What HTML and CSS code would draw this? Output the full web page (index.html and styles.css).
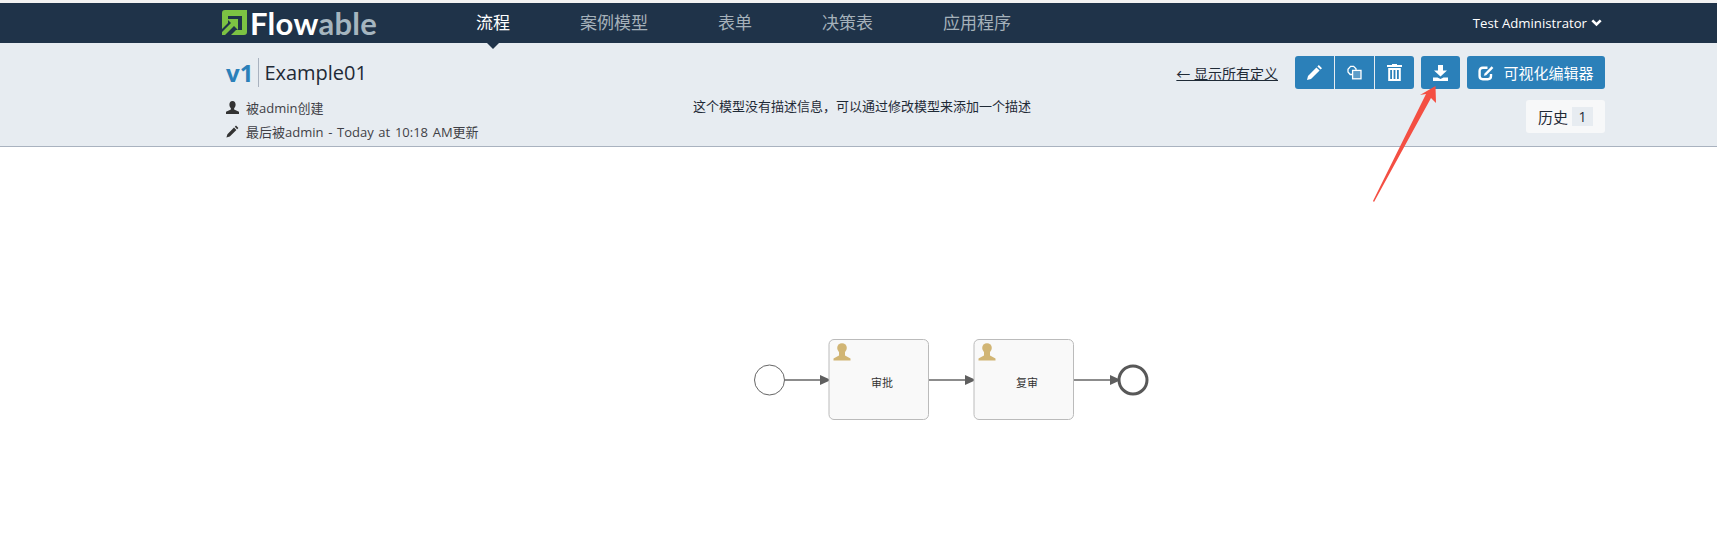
FILE: index.html
```html
<!DOCTYPE html>
<html lang="zh">
<head>
  <meta charset="UTF-8">
  <title>Flowable - Example01</title>
  <link rel="stylesheet" href="styles.css">
</head>
<body>
  <nav class="navbar">
    <a href="#" class="logo">
      <svg class="logo-mark" width="25" height="26" viewBox="0 0 25 26">
        <path d="M3 0H25V22Q25 25 22 25H9L14 20H20V6H6V13L0 19V3Q0 0 3 0Z" fill="#7cc243"/>
        <path d="M0 25L3 25 12 16 16 20V9H5L9 13 0 22Z" fill="#7cc243"/>
      </svg>
      <span class="logo-text">Flow<span class="logo-light">able</span></span>
    </a>
    <div class="nav-links">
      <a href="#" class="active">流程</a>
      <a href="#">案例模型</a>
      <a href="#">表单</a>
      <a href="#">决策表</a>
      <a href="#">应用程序</a>
    </div>
    <a href="#" class="user-menu">Test Administrator
      <svg width="11" height="8" viewBox="0 0 11 8"><path d="M1.3 1.3L5.5 5.5 9.7 1.3" fill="none" stroke="#fff" stroke-width="2.6"/></svg>
    </a>
  </nav>

  <header class="subheader">
    <div class="model-info">
      <h2 class="model-title"><span class="version">v1</span><span class="name">Example01</span></h2>
      <div class="meta">
        <svg width="13" height="13" viewBox="0 0 13 13"><path d="M6.5 0C8.5 0 9.6 1.6 9.6 3.6 9.6 5.3 8.9 6.6 8.1 7.4V8.6L13 10.7V13H0V10.7L4.9 8.6V7.4C4.1 6.6 3.4 5.3 3.4 3.6 3.4 1.6 4.5 0 6.5 0Z" fill="#333"/></svg>
        <span>被admin创建</span>
      </div>
      <div class="meta">
        <svg width="13" height="13" viewBox="0 0 13 13"><path d="M10 0.6L12.4 3 11.2 4.2 8.8 1.8ZM8 2.6L10.4 5 3.8 11.6 0.4 12.6 1.4 9.2Z" fill="#333"/></svg>
        <span>最后被admin - Today at 10:18 AM更新</span>
      </div>
    </div>
    <p class="description">这个模型没有描述信息，可以通过修改模型来添加一个描述</p>
    <div class="actions">
      <div class="action-row">
        <a href="#" class="back-link">← 显示所有定义</a>
        <div class="btn-group">
          <button class="btn">
            <svg width="17" height="17" viewBox="0 0 17 17"><path d="M12.8 1L16 4.2 14.6 5.6 11.4 2.4ZM10.4 3.4L13.6 6.6 5 15 1 16 2 12Z" fill="#fff"/></svg>
          </button>
          <button class="btn">
            <svg width="16" height="16" viewBox="0 0 16 16" fill="none" stroke="#fff" stroke-width="1.3"><path d="M6 9.5H3.2L1 7V4.2L3.6 1.4H6.6L9 3.8V5"/><rect x="5.6" y="5.4" width="8.4" height="8.4" fill="#5d9dc9"/></svg>
          </button>
          <button class="btn">
            <svg width="15" height="17" viewBox="0 0 15 17"><path d="M5 0H10V1H15V3H0V1H5ZM1.2 4H13.8V17H1.2ZM3.2 6V15H5V6ZM6.6 6V15H8.4V6ZM10 6V15H11.8V6Z" fill="#fff" fill-rule="evenodd"/></svg>
          </button>
        </div>
        <button class="btn btn-single">
          <svg width="15" height="16" viewBox="0 0 15 16"><path d="M5 0H10V5.5H14L7.5 11.5 1 5.5H5ZM0 12.5H4.5L7.5 14 10.5 12.5H15V16H0Z" fill="#fff"/></svg>
        </button>
        <button class="btn btn-editor">
          <svg width="16" height="16" viewBox="0 0 16 16"><path d="M6.6 8.4L13.6 1.2 15.4 3 8.2 10.2 5.8 10.8Z" fill="#fff"/><path d="M13 9V11C13 13 11.8 14.2 9.8 14.2H4.8C2.8 14.2 1.6 13 1.6 11V6C1.6 4 2.8 2.8 4.8 2.8H9.5" fill="none" stroke="#fff" stroke-width="2.4"/></svg>
          可视化编辑器
        </button>
      </div>
      <div class="history">历史<span class="history-count">1</span></div>
    </div>
  </header>

  <main class="canvas">
    <svg class="diagram" width="420" height="100" viewBox="740 330 420 100">
      <defs>
        <g id="task-user">
          <circle cx="0" cy="-4" r="4.8" fill="#d1b574"/>
          <path d="M-8.5 8.5V6.5L-3 3.5V-1H3V3.5L8.5 6.5V8.5Z" fill="#d1b574"/>
        </g>
      </defs>
      <circle cx="769.5" cy="380" r="15" fill="#fff" stroke="#666" stroke-width="1"/>
      <path class="flow" d="M784.5 380H822"/>
      <path class="head" d="M820 375L831 380 820 385Z"/>
      <rect class="task" x="829" y="339.5" width="99.5" height="80" rx="5"/>
      <use href="#task-user" x="842" y="352"/>
      <text class="task-label" x="882" y="387">审批</text>
      <path class="flow" d="M929 380H967"/>
      <path class="head" d="M965 375L976 380 965 385Z"/>
      <rect class="task" x="974" y="339.5" width="99.5" height="80" rx="5"/>
      <use href="#task-user" x="987" y="352"/>
      <text class="task-label" x="1027" y="387">复审</text>
      <path class="flow" d="M1074 380H1112"/>
      <path class="head" d="M1110 375L1121 380 1110 385Z"/>
      <circle cx="1133" cy="380" r="14" fill="#fff" stroke="#585858" stroke-width="3"/>
    </svg>
  </main>

  <!-- annotation drawn on top of the screenshot -->
  <svg class="annotation" width="70" height="125" viewBox="1370 82 70 125">
    <path d="M1435.5 86L1436 103 1431 98 1374 202 1373 201 1426 94 1420 95Z" fill="#f44f43"/>
  </svg>
</body>
</html>
```

FILE: styles.css
```css
* {
  box-sizing: border-box;
}
html, body {
  height: 100%;
}
body {
  margin: 0;
  border-top: 3px solid #f2f2f2;
  background-color: #fff;
  color: #1f2a36;
  font-family: "Open Sans", "Noto Sans CJK SC", sans-serif;
  font-size: 13px;
  overflow: hidden;
  position: relative;
}
a {
  color: inherit;
  text-decoration: none;
}

/* navbar */
.navbar {
  display: flex;
  align-items: center;
  height: 40px;
  padding: 0 112px 0 222px;
  background-color: #1f3349;
  color: #fff;
}
.logo {
  display: flex;
  align-items: center;
  gap: 3px;
  width: 254px;
}
.logo-mark {
  flex: none;
}
.logo-text {
  font-family: Lato, sans-serif;
  font-size: 31px;
  font-weight: 700;
  line-height: 40px;
  letter-spacing: 0.3px;
}
.logo-light {
  color: #a5b5bf;
}
.nav-links {
  display: flex;
  gap: 70px;
  flex: 1;
  height: 100%;
}
.nav-links a {
  position: relative;
  font-size: 17px;
  line-height: 40px;
  color: #a5b1ba;
}
.nav-links a.active {
  color: #fff;
}
.nav-links a.active::after {
  content: '';
  position: absolute;
  left: 50%;
  bottom: -6px;
  margin-left: -6px;
  border-left: 6px solid transparent;
  border-right: 6px solid transparent;
  border-top: 6px solid #1f3349;
}
.user-menu {
  display: flex;
  align-items: center;
  gap: 4px;
  font-size: 13.2px;
  padding-right: 3px;
}

/* model header */
.subheader {
  display: flex;
  height: 104px;
  padding: 0 112px 0 226px;
  background-color: #e7ecf1;
  border-bottom: 1px solid #a9b2bf;
}
.model-info {
  width: 467px;
}
.model-title {
  display: flex;
  align-items: center;
  height: 29px;
  margin: 15px 0 8px;
  font-weight: 400;
}
.version {
  padding-right: 5px;
  border-right: 1px solid #a9b2bf;
  color: #2b80b9;
  font-size: 24px;
  font-weight: 700;
  line-height: 29px;
}
.name {
  padding-left: 5px;
  font-size: 20px;
}
.meta {
  display: flex;
  align-items: center;
  gap: 7px;
  height: 24px;
  color: #3f3f46;
  word-spacing: 1.3px;
}
.meta svg {
  flex: none;
}
.description {
  width: 380px;
  margin: 51px 0 0;
  line-height: 24px;
}
.actions {
  flex: 1;
  padding-top: 13px;
}
.action-row {
  display: flex;
  justify-content: flex-end;
  align-items: center;
  gap: 7px;
}
.back-link {
  margin-right: 10px;
  font-size: 14px;
  text-decoration: underline;
}
.btn-group {
  display: flex;
  gap: 1px;
  border-radius: 3px;
  overflow: hidden;
}
.btn {
  display: flex;
  align-items: center;
  justify-content: center;
  width: 39px;
  height: 33px;
  padding: 0;
  border: 0;
  background-color: #2b80b9;
  color: #fff;
  font-family: inherit;
  font-size: 15px;
}
.btn-single,
.btn-editor {
  border-radius: 3px;
}
.btn-editor {
  gap: 9px;
  width: 138px;
}
.history {
  display: flex;
  align-items: center;
  gap: 4px;
  width: 79px;
  height: 33px;
  margin: 11px 0 0 auto;
  padding-left: 12px;
  background-color: #f7f8f9;
  border-radius: 3px;
  font-size: 15px;
}
.history-count {
  width: 21px;
  height: 19px;
  background-color: #e7ecf1;
  line-height: 19px;
  text-align: center;
  font-size: 14px;
}

/* process diagram */
.canvas {
  padding: 183px 0 0 740px;
}
.diagram {
  display: block;
}
.task {
  fill: #f9f9f9;
  stroke: #bbb;
  stroke-width: 1;
}
.flow {
  fill: none;
  stroke: #666;
  stroke-width: 1.5;
}
.head {
  fill: #5f5f5f;
}
.task-label {
  fill: #333;
  font-size: 11px;
  text-anchor: middle;
}
.annotation {
  position: absolute;
  left: 1370px;
  top: 79px;
}
```
